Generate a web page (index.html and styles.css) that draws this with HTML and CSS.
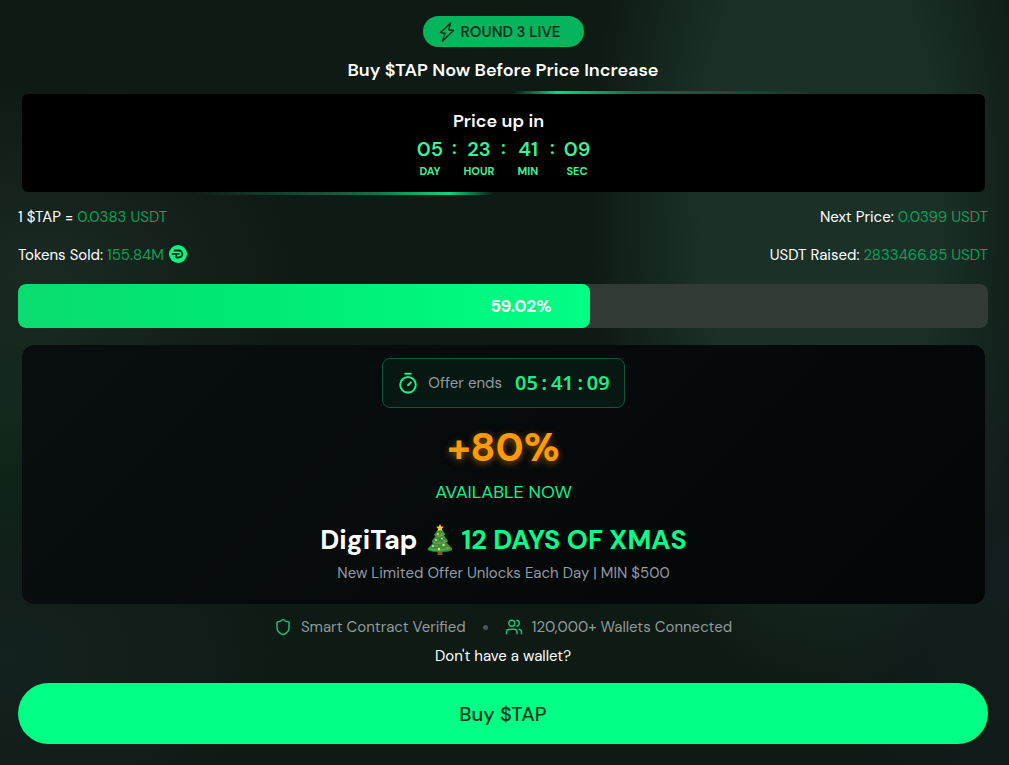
FILE: index.html
```html
<!DOCTYPE html>
<html lang="en">
<head>
<meta charset="utf-8">
<meta name="viewport" content="width=device-width, initial-scale=1">
<title>Buy $TAP</title>
<link rel="stylesheet" href="styles.css">
</head>
<body>
<main class="presale">
  <header class="intro">
    <div class="badge">
      <svg class="icon-bolt" viewBox="0 0 16 20" aria-hidden="true"><path d="M11.500 1 1.500 10.500l4.500.8L3.500 19l11-10.500-4.800-.8z"/></svg>
      <span>ROUND 3 LIVE</span>
    </div>
    <h1 class="title">Buy $TAP Now Before Price Increase</h1>
  </header>

  <section class="countdown">
    <h2 class="countdown-title">Price up in</h2>
    <div class="clock">
      <div class="unit"><b>05</b><small>DAY</small></div><i>:</i>
      <div class="unit"><b>23</b><small>HOUR</small></div><i>:</i>
      <div class="unit"><b>41</b><small>MIN</small></div><i>:</i>
      <div class="unit"><b>09</b><small>SEC</small></div>
    </div>
  </section>

  <section class="stats">
    <p>1 $TAP = <em>0.0383 USDT</em></p>
    <p>Next Price: <em>0.0399 USDT</em></p>
    <p class="sold"><span>Tokens Sold: <em>155.84M</em></span>
      <svg class="icon-coin" viewBox="0 0 18 18" aria-hidden="true"><circle cx="9" cy="9" r="9"/><path d="M5.500 5.500h4.300a3.500 3.500 0 0 1 0 7H7.200v-2M3.500 8.800h6.300"/></svg>
    </p>
    <p>USDT Raised: <em>2833466.85 USDT</em></p>
  </section>

  <div class="progress" role="progressbar" aria-label="Tokens sold" aria-valuenow="59.02" aria-valuemin="0" aria-valuemax="100">
    <div class="progress-fill" style="width:59.02%">59.02%</div>
  </div>

  <section class="offer">
    <div class="timer">
      <svg class="icon-timer" viewBox="0 0 24 24" aria-hidden="true"><path d="M9 2h6M12 14.500l3.200-3.200"/><circle cx="12" cy="14" r="8.500"/></svg>
      <span class="timer-label">Offer ends</span>
      <span class="timer-value"><span>05</span><i>:</i><span>41</span><i>:</i><span>09</span></span>
    </div>
    <p class="bonus">+80%</p>
    <p class="available">AVAILABLE NOW</p>
    <h2 class="campaign"><span>DigiTap</span>
      <svg class="icon-tree" viewBox="0 0 28 32" aria-hidden="true">
        <path fill="#80512f" d="M11.500 26h5v5h-5z"/>
        <path fill="#2f9444" d="M14 3 8.200 10.500l2.200.6-4.800 6.200 2.400.6-5.800 6c-1.300 1.600 0 3 2 2.800 3.400 2.200 6.600 0 9.800 1.600 3.200-1.600 6.600.6 9.800-1.600 2 .2 3.300-1.200 2-2.800l-5.800-6 2.400-.6-4.800-6.200 2.200-.6z"/>
        <path fill="none" stroke="#4fb84b" stroke-width="1.200" d="M9 11c3 2 6 1 9-.5M6.500 18c4 2 10 1.500 14-.5M3.500 25c6 2 14 1 20-.5"/>
        <path fill="#ffc928" d="m14 0 1.200 2.500 2.600.3-1.900 1.900.5 2.600L14 6l-2.400 1.300.5-2.600-1.900-1.900 2.600-.3z"/>
        <g fill="#ffdc47"><circle cx="12" cy="10" r="1"/><circle cx="16" cy="14.500" r="1"/><circle cx="10" cy="16" r="1.100"/><circle cx="17.500" cy="21" r="1.200"/><circle cx="7" cy="22" r="1.100"/><circle cx="13" cy="25" r="1.200"/></g>
        <g fill="#ef604b"><circle cx="15.500" cy="10" r="1"/><circle cx="13" cy="18.500" r="1.100"/><circle cx="18.500" cy="17" r="1"/><circle cx="10.500" cy="22" r="1.100"/><circle cx="21.500" cy="24" r="1.200"/></g>
      </svg>
      <span class="highlight">12 DAYS OF XMAS</span>
    </h2>
    <p class="terms">New Limited Offer Unlocks Each Day | MIN $500</p>
  </section>

  <footer class="actions">
    <ul class="trust">
      <li><svg class="icon-line" viewBox="0 0 24 24" aria-hidden="true"><path d="M20 13c0 5-3.500 7.500-7.660 8.950a1 1 0 0 1-.67-.01C7.500 20.500 4 18 4 13V6a1 1 0 0 1 1-1c2 0 4.500-1.200 6.240-2.720a1.170 1.170 0 0 1 1.520 0C14.510 3.810 17 5 19 5a1 1 0 0 1 1 1z"/></svg>Smart Contract Verified</li>
      <li class="dot" aria-hidden="true"></li>
      <li><svg class="icon-line" viewBox="0 0 24 24" aria-hidden="true"><path d="M16 21v-2a4 4 0 0 0-4-4H6a4 4 0 0 0-4 4v2M22 21v-2a4 4 0 0 0-3-3.870M16 3.130a4 4 0 0 1 0 7.750"/><circle cx="9" cy="7" r="4"/></svg>120,000+ Wallets Connected</li>
    </ul>
    <a class="wallet-link" href="#wallet">Don't have a wallet?</a>
    <button class="buy" type="button">Buy $TAP</button>
  </footer>
</main>
</body>
</html>
```
FILE: styles.css
```css
* { box-sizing: border-box; }
body, h1, h2, p, ul { margin: 0; padding: 0; }
body {
  min-height: 100vh;
  color: #fff;
  font: 400 15px/20px "DM Sans", Inter, sans-serif;
  background:
    radial-gradient(ellipse 23% 66% at 81% 26%, #1b3128 0 50%, transparent 100%),
    radial-gradient(ellipse 26% 26% at 4% 36%, #1a2a22, transparent),
    radial-gradient(ellipse 18% 24% at 0 54%, #10291a, transparent),
    radial-gradient(ellipse 30% 25% at 0 86%, #14221f, transparent),
    radial-gradient(ellipse 20% 40% at 100% 75%, #131e20, transparent),
    #0e1a14;
}
svg { flex: none; fill: none; stroke: currentColor; stroke-linecap: round; stroke-linejoin: round; }
em, i { font-style: normal; }
.presale { padding: 16px 21px 20px 18px; }
.intro { display: flex; flex-direction: column; align-items: center; gap: 10px; }
.badge {
  display: flex; align-items: center; gap: 6px;
  height: 31px; padding: 0 23px 0 16px;
  border-radius: 16px; background: #05b55d; color: #0b331d;
  font-weight: 600; line-height: 18px;
}
.icon-bolt { width: 16px; height: 20px; stroke-width: 1.5; }
.title { font-size: 18px; line-height: 26px; font-weight: 600; }
.countdown {
  position: relative;
  margin: 11px 3px 0 4px; padding: 16px 0 13px;
  border-radius: 6px; background: #000; text-align: center;
}
.countdown::before, .countdown::after { content: ""; position: absolute; height: 3px; }
.countdown::before { top: -3px; left: 51%; right: 18%; background: linear-gradient(90deg, transparent, #10d67e 15%, #176d49 40%, transparent); }
.countdown::after { bottom: -3px; left: 18%; right: 51%; background: linear-gradient(270deg, transparent, #10d67e 15%, #176d49 40%, transparent); }
.countdown-title { margin-right: 10px; font-size: 18px; line-height: 22px; font-weight: 600; }
.clock { display: flex; justify-content: center; gap: 8px; color: #3df09a; font-size: 20px; line-height: 28px; margin-top: 3px; }
.clock i { width: 6px; line-height: 24px; font-weight: 600; }
.unit { display: flex; flex-direction: column; align-items: center; width: 27px; }
.unit b { font-weight: 600; }
.unit small { font-size: 11px; line-height: 16px; font-weight: 700; }
.stats { display: grid; grid-template-columns: auto auto; justify-content: space-between; row-gap: 18px; margin-top: 15px; }
.stats p:nth-child(even) { text-align: right; }
.stats em { color: #0c9f58; }
.sold { display: flex; gap: 5px; }
.icon-coin { width: 18px; height: 18px; stroke: #0b2e1c; stroke-width: 1.8; }
.icon-coin circle { fill: #0bf581; stroke: none; }
.progress { height: 44px; margin-top: 19px; border-radius: 8px; background: #313a34; overflow: hidden; }
.progress-fill {
  height: 100%; padding-right: 39px; border-radius: 8px;
  background: linear-gradient(90deg, #0bdc70, #00e873 35%, #00ff84);
  font-size: 17px; font-weight: 700; line-height: 45px; text-align: right;
}
.offer {
  display: flex; flex-direction: column; align-items: center;
  margin: 17px 3px 0 4px; padding: 13px 0 21px;
  border-radius: 12px; background: linear-gradient(135deg, #090e0f, #030607);
}
.timer {
  display: flex; align-items: center; height: 50px; padding: 0 14px;
  border: 1px solid #11573a; border-radius: 8px; background: #071711;
}
.icon-timer { width: 22px; height: 22px; margin-right: 9px; color: #17ed8b; stroke-width: 2.2; }
.timer-label { margin-right: 13px; color: #929aa2; }
.timer-value { display: flex; color: #17ed8b; font: 600 20px/24px "Noto Sans", sans-serif; }
.timer-value i { width: 13px; text-align: center; }
.bonus { margin-top: 15px; color: #ff9a05; font-size: 40px; line-height: 48px; font-weight: 700; text-shadow: 0 2px 7px #ff9a0580; }
.available { margin-top: 9px; color: #16ee8b; font-size: 18px; line-height: 24px; }
.campaign { display: flex; align-items: center; gap: 8px; margin-top: 18px; font-size: 27px; line-height: 35px; font-weight: 700; }
.icon-tree { width: 28px; height: 32px; stroke: none; }
.highlight { color: #0bfa8a; }
.terms { margin-top: 6px; color: #929aa5; }
.actions { display: flex; flex-direction: column; align-items: center; }
.trust { display: flex; align-items: center; gap: 17px; margin-top: 13px; list-style: none; color: #919b9c; }
.trust li { display: flex; align-items: center; gap: 9px; }
.icon-line { width: 18px; height: 18px; color: #17bd79; stroke-width: 2; }
.trust .dot { width: 5px; height: 5px; border-radius: 50%; background: #4a5560; }
.wallet-link { margin-top: 9px; color: #fff; text-decoration: none; }
.buy {
  width: 100%; height: 61px; margin-top: 17px; border: 0; border-radius: 31px;
  background: #00ff84; color: #08361c; font: 500 20px/28px "DM Sans", Inter, sans-serif; cursor: pointer;
}
```
